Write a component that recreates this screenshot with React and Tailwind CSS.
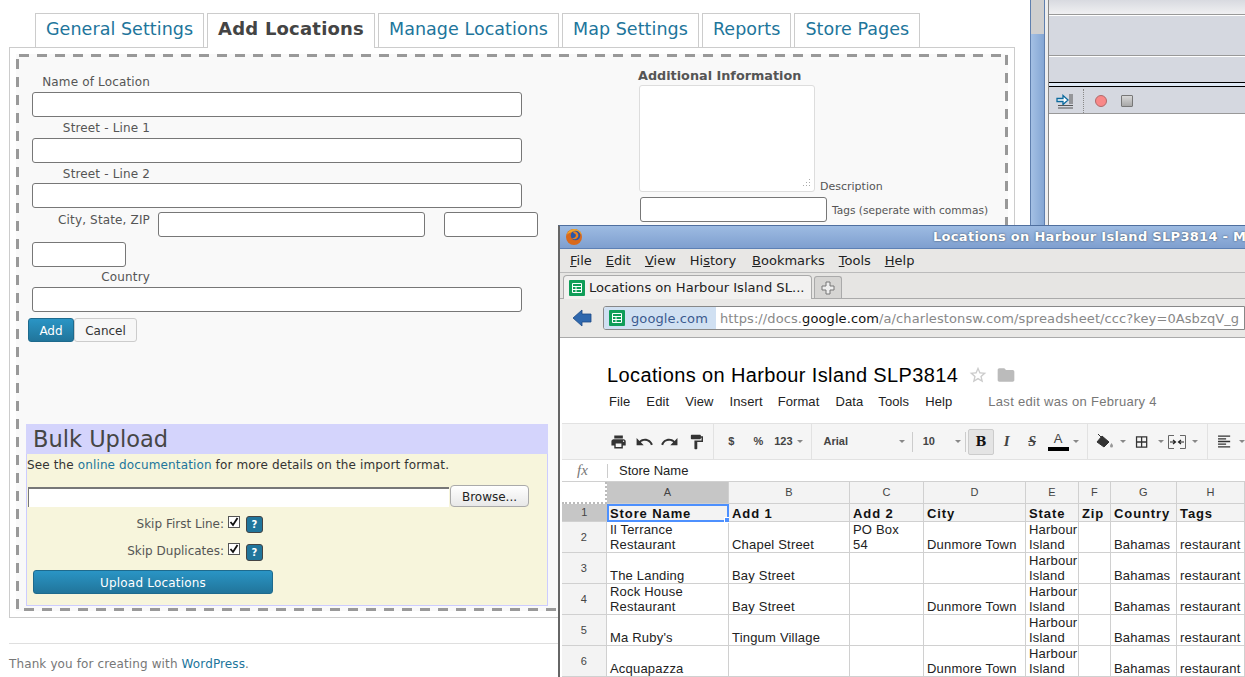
import React from 'react';
import { MdPrint, MdUndo, MdRedo, MdFormatPaint, MdBorderAll, MdFormatAlignLeft, MdStarBorder, MdFolder } from 'react-icons/md';

const TABS = ['General Settings', 'Add Locations', 'Manage Locations', 'Map Settings', 'Reports', 'Store Pages'];

const ROWS = [
  ['Il Terrance Restaurant', 'Chapel Street', 'PO Box\n54', 'Dunmore Town', 'Harbour Island', '', 'Bahamas', 'restaurant'],
  ['The Landing', 'Bay Street', '', '', 'Harbour Island', '', 'Bahamas', 'restaurant'],
  ['Rock House Restaurant', 'Bay Street', '', 'Dunmore Town', 'Harbour Island', '', 'Bahamas', 'restaurant'],
  ["Ma Ruby's", 'Tingum Village', '', '', 'Harbour Island', '', 'Bahamas', 'restaurant'],
  ['Acquapazza', '', '', 'Dunmore Town', 'Harbour Island', '', 'Bahamas', 'restaurant'],
];

const COLS = ['A', 'B', 'C', 'D', 'E', 'F', 'G', 'H'];
const HEADS = ['Store Name', 'Add 1', 'Add 2', 'City', 'State', 'Zip', 'Country', 'Tags'];

const Field = ({ className }) => (
  <input type="text" className={`block h-[25px] bg-white border border-[#777] rounded-[3px] ${className}`} />
);

const FormLabel = ({ children, className = '' }) => (
  <div className={`w-[118px] text-right text-[12px] tracking-[0.15px] leading-[16px] pb-[2px] text-[#555] ${className}`}>{children}</div>
);

const Check = () => (
  <span className="w-[12px] h-[12px] bg-white border border-[#555] flex items-center justify-center">
    <svg width="10" height="10" viewBox="0 0 10 10">
      <path d="M1.5 5 L4 8 L8.5 1" fill="none" stroke="#111" strokeWidth="1.8" />
    </svg>
  </span>
);

const Help = () => (
  <span className="ml-[6px] mt-[2px] w-[17px] h-[17px] rounded-[3px] bg-[#21759b] border border-[#444] text-white text-[10px] font-bold flex items-center justify-center">?</span>
);

const Caret = ({ className = '' }) => (
  <span className={`w-0 h-0 border-x-[3px] border-x-transparent border-t-[3px] border-t-[#888] ${className}`} />
);

const SheetIcon = () => (
  <svg width="16" height="16" viewBox="0 0 16 16" className="shrink-0">
    <rect width="16" height="16" rx="1" fill="#0f9d58" />
    <path d="M3.5 3.5h9v9h-9z M3.5 6.5h9 M3.5 9.5h9 M7 6.5v6" fill="none" stroke="#fff" strokeWidth="1" />
  </svg>
);

const FirefoxIcon = () => (
  <svg width="18" height="18" viewBox="0 0 18 18" className="shrink-0">
    <circle cx="9" cy="9" r="8" fill="#d9691c" />
    <path d="M1.500 7C3 3 6 1 9 1c4 0 7 2.500 7.800 6-1.500-2.200-4-3.200-7-3C6 4.200 3.500 5 1.500 7z" fill="#efa52c" />
    <circle cx="10.500" cy="7.500" r="4.800" fill="#2b57a6" />
    <path d="M8 3.500c2.500-.6 5 1 5.300 3.500.2 2-1 3.500-2.800 4-1.500.4-3-.1-4-1.200 1.500.5 3.200.2 4-1 .8-1.200.4-2.600-.8-3.200-.6-.3-1.300-.3-1.700-2.100z" fill="#e9811f" />
  </svg>
);

const BackArrow = () => (
  <svg width="20" height="20" viewBox="0 0 20 20">
    <path d="M1 10 L10 2 V6 H19 V14 H10 V18 Z" fill="#2f68ae" stroke="#1d4a85" strokeWidth="0.8" />
  </svg>
);

const MergeIcon = () => (
  <svg width="18" height="14" viewBox="0 0 18 14">
    <path d="M6 .5H.5v13H6 M12 .5h5.500v13H12" fill="none" stroke="#666" />
    <path d="M2 7h5M5 5l2.500 2L5 9 M16 7h-5M13 5l-2.500 2L13 9" fill="none" stroke="#222" strokeWidth="1.200" />
  </svg>
);

const FillIcon = () => (
  <svg width="18" height="18" viewBox="0 0 18 18">
    <path d="M2 1 L6 5 M6 3 L13 9 L8 14 L1 9 Z" fill="#333" stroke="#333" strokeWidth="1" />
    <path d="M15.500 10c1 1.500 1.500 2.300 1.500 3a1.500 1.500 0 0 1-3 0c0-.7.500-1.500 1.500-3z" fill="#999" />
  </svg>
);

const StoreForm = () => (
  <div className="pl-[16px]">
    <FormLabel className="mt-[20px]">Name of Location</FormLabel>
    <Field className="w-[490px]" />
    <FormLabel className="mt-[3px]">Street - Line 1</FormLabel>
    <Field className="w-[490px]" />
    <FormLabel className="mt-[3px] -mb-[1px]">Street - Line 2</FormLabel>
    <Field className="w-[490px]" />
    <div className="flex mt-[4px]">
      <FormLabel className="leading-[14px] mr-[8px]">City, State, ZIP</FormLabel>
      <Field className="w-[267px]" />
      <Field className="w-[94px] ml-[19px]" />
    </div>
    <Field className="w-[94px] mt-[5px]" />
    <FormLabel className="mt-[2px]">Country</FormLabel>
    <Field className="w-[490px]" />
    <div className="flex -ml-[4px] mt-[6px] text-[12px]">
      <button className="w-[46px] h-[24px] pt-[1px] rounded-[3px] bg-gradient-to-b from-[#2a95c5] to-[#21759b] border border-[#1e6a8d] text-white">Add</button>
      <button className="w-[63px] h-[24px] pt-[1px] rounded-[3px] bg-[#f7f7f7] border border-[#ccc] text-[#333]">Cancel</button>
    </div>
  </div>
);

const BulkUpload = () => (
  <div className="ml-[10px] mt-[82px] w-[522px] h-[182px] bg-[#f7f5dc] border border-[#ccccff] border-t-0 text-[12px] text-[#555]">
    <h2 className="h-[30px] -mx-px bg-[#d4d4fc] pl-[7px] text-[22.5px] leading-[30px] text-[#464646]">Bulk Upload</h2>
    <p className="mt-[4px] text-[#333] leading-[15px] tracking-[0.13px]">
      See the <span className="text-[#21759b]">online documentation</span> for more details on the import format.
    </p>
    <div className="flex items-center ml-[1px] mt-[12px] h-[22px]">
      <div className="w-[421px] h-[20px] mt-[1px] bg-white border-t-[2px] border-l border-[#777]" />
      <button className="ml-[1px] w-[79px] h-[22px] pt-[1px] rounded-[4px] bg-gradient-to-b from-white to-[#e8e8e8] border border-[#aaa] text-[#222]">Browse...</button>
    </div>
    <div className="flex mt-[7px] h-[20px]">
      <span className="w-[197px] text-right leading-[20px]">Skip First Line:</span>
      <span className="ml-[4px] mt-[2px]"><Check /></span>
      <Help />
    </div>
    <div className="flex mt-[8px] h-[20px]">
      <span className="w-[197px] text-right leading-[18px]">Skip Duplicates:</span>
      <span className="ml-[4px] mt-[1px]"><Check /></span>
      <Help />
    </div>
    <button className="block ml-[6px] mt-[8px] w-[240px] h-[24px] pt-[1px] rounded-[3px] bg-gradient-to-b from-[#2a95c5] to-[#21759b] border border-[#1e6a8d] text-white tracking-[0.2px]">Upload Locations</button>
  </div>
);

const AdditionalInfo = () => (
  <div className="ml-[90px] pt-[14px]">
    <h3 className="text-[12.8px] leading-[15px] font-bold text-[#555]">Additional Information</h3>
    <div className="flex items-end ml-[1px] mt-[2px]">
      <div className="relative w-[176px] h-[107px] bg-white border border-[#ddd] rounded-[3px]">
        <svg width="10" height="10" viewBox="0 0 10 10" className="absolute right-[3px] bottom-[3px]">
          <path d="M8.500 1v1M8.500 4v1M8.500 7v1M5.500 4v1M5.500 7v1M2.500 7v1" stroke="#aaa" strokeWidth="1" />
        </svg>
      </div>
      <span className="ml-[5px] -mb-[1px] text-[11px] text-[#555] leading-[13px]">Description</span>
    </div>
    <div className="flex items-center ml-[2px] mt-[5px]">
      <Field className="w-[187px]" />
      <span className="ml-[5px] pt-[3px] text-[10.6px] text-[#555]">Tags (seperate with commas)</span>
    </div>
  </div>
);

const SideWindow = () => (
  <div className="flex-1 flex h-[225px]">
    <div className="w-[15px] flex flex-col border-x border-[#5f7fae]">
      <div className="h-[34px] bg-[#cfcfcf]" />
      <div className="flex-1 bg-gradient-to-r from-[#a4c0e4] to-[#84a6d4]" />
    </div>
    <div className="w-[4px] bg-[#eeeeee] border-r border-[#888]" />
    <div className="flex-1 flex flex-col bg-white">
      <div className="h-[15px] bg-gradient-to-b from-[#d8dae0] to-[#f0f0f2] border-b border-[#999]" />
      <div className="h-[41px] bg-[#d5d8e0] border-b border-[#999] border-t border-t-white" />
      <div className="h-[26px] bg-[#d5d8e0] border-t border-t-white" />
      <div className="h-[5px] bg-[#dfe9f6] border-y border-black" />
      <div className="h-[27px] pt-[2px] flex items-center bg-[#d5d8e0] border-b border-[#999]">
        <svg width="18" height="16" viewBox="0 0 18 16" className="ml-[7px]">
          <path d="M1 5.500h6V2.500l5 4.500-5 4.500V8.500H1z" fill="#fff" stroke="#0b6a9e" strokeWidth="1.300" />
          <path d="M13 2h4M13 4h4M13 6h4M13 8h4M13 10h4M2 12.500h15M2 15h15" stroke="#555" strokeWidth="1" />
        </svg>
        <span className="h-[24px] ml-[9px] border-l border-dotted border-[#888]" />
        <span className="ml-[11px] w-[12px] h-[12px] rounded-full bg-[#f98888] border border-[#b06a6a]" />
        <span className="ml-[14px] w-[12px] h-[12px] rounded-[1px] bg-gradient-to-b from-[#d8d8d8] to-[#a8a8a8] border border-[#777]" />
      </div>
    </div>
  </div>
);

const SheetToolbar = () => (
  <div className="h-[37px] flex items-center bg-[#f5f5f5] border-y border-[#e2e2e2] text-[#444] text-[11px] font-bold">
    <MdPrint className="ml-[48px] text-[#333]" size={18} />
    <MdUndo className="ml-[8px] text-[#333]" size={20} />
    <MdRedo className="ml-[6px] text-[#333]" size={20} />
    <MdFormatPaint className="ml-[9px] text-[#333]" size={18} />
    <span className="ml-[8px] h-[36px] border-l border-[#e2e2e2]" />
    <span className="ml-[14px]">$</span>
    <span className="ml-[19px]">%</span>
    <span className="ml-[11px]">123</span>
    <Caret className="ml-[4px]" />
    <span className="ml-[8px] h-[36px] border-l border-[#e2e2e2]" />
    <span className="ml-[12px] w-[79px]">Arial</span>
    <Caret />
    <span className="ml-[7px] h-[20px] border-l border-[#ccc]" />
    <span className="ml-[10px] w-[34px]">10</span>
    <Caret />
    <span className="ml-[4px] h-[20px] border-l border-[#ccc]" />
    <span className="ml-[2px] w-[27px] h-[26px] flex items-center justify-center rounded-[2px] bg-[#e4e4e4] border border-[#ccc] font-['DejaVu_Serif'] text-[13px] text-[#111]">B</span>
    <span className="ml-[10px] w-[12px] font-['Liberation_Serif'] italic text-[15px] font-bold">I</span>
    <span className="ml-[13px] w-[14px] font-['Liberation_Serif'] italic line-through text-[14px]">S</span>
    <span className="ml-[6px] w-[21px] flex flex-col items-center font-['Liberation_Sans'] font-normal text-[13px] leading-[13px]">
      A
      <span className="w-[21px] h-[4px] mt-[2px] bg-black" />
    </span>
    <Caret className="ml-[4px]" />
    <span className="ml-[8px] h-[36px] border-l border-[#e2e2e2]" />
    <span className="ml-[8px]"><FillIcon /></span>
    <Caret className="ml-[6px]" />
    <MdBorderAll className="ml-[8px] text-[#333]" size={16} />
    <Caret className="ml-[9px]" />
    <span className="ml-[4px]"><MergeIcon /></span>
    <Caret className="ml-[6px]" />
    <span className="ml-[9px] h-[36px] border-l border-[#e2e2e2]" />
    <MdFormatAlignLeft className="ml-[8px] text-[#333]" size={17} />
    <Caret className="ml-[7px]" />
  </div>
);

const SheetGrid = () => (
  <div className="grid grid-cols-[45px_122px_121px_74px_102px_53px_32px_66px_68px] grid-rows-[22px_18px_31px_31px_31px_31px_31px] text-[13px] leading-[15px] tracking-[0.2px] text-[#222] border-t border-[#d0d0d0]">
    <div className="bg-white border-r-2 border-b-2 border-dotted border-[#bbb]" />
    {COLS.map((c, i) => (
      <div key={c} className={`flex items-center justify-center text-[11px] text-[#444] border-r border-b border-[#d0d0d0] ${i === 0 ? 'bg-[#c6c6c6]' : 'bg-[#f3f3f3]'}`}>{c}</div>
    ))}
    <div className="flex items-center justify-center bg-[#c6c6c6] text-[11px] text-[#444] border-b border-[#d0d0d0]">1</div>
    {HEADS.map((h, i) => (
      <div key={h} className={`relative flex items-end font-bold tracking-[0.9px] bg-[#f3f3f3] text-[#111] ${i === 0 ? 'px-[1px] border-2 border-[#4d90fe]' : 'px-[3px] border-r border-b border-[#d0d0d0]'}`}>
        {i === 0 ? <span className="relative top-[1px]">{h}</span> : h}
        {i === 0 && <span className="absolute -right-[3px] -bottom-[3px] w-[6px] h-[6px] bg-[#4d90fe] border border-white" />}
      </div>
    ))}
    {ROWS.map((row, r) => (
      <React.Fragment key={r}>
        <div className="flex items-center justify-center bg-[#f3f3f3] text-[11px] text-[#444] border-r border-b border-[#d0d0d0]">{r + 2}</div>
        {row.map((cell, c) => (
          <div key={c} className="flex items-end px-[3px] border-r border-b border-[#d0d0d0] overflow-hidden whitespace-pre-line">{cell}</div>
        ))}
      </React.Fragment>
    ))}
  </div>
);

const BrowserWindow = () => (
  <div className="absolute left-[558px] top-[225px] w-[687px] h-[452px] flex flex-col overflow-hidden bg-white border-l-2 border-l-[#666] border-t border-t-[#4f6f9f]">
    <div className="h-[23px] shrink-0 flex items-center pl-[5px] bg-gradient-to-b from-[#9dbbe2] to-[#7f9fcf] border-b border-[#5d80b4] whitespace-nowrap">
      <FirefoxIcon />
      <span className="ml-[350px] text-[13px] font-bold tracking-[0.3px] text-white [text-shadow:0_0_2px_#345]">Locations on Harbour Island SLP3814 - Mozilla Firefox</span>
    </div>
    <div className="h-[24px] pt-[1px] shrink-0 flex items-center pl-[10px] gap-[14px] bg-[#e8e7e5] border-b border-[#bbb] text-[13px] text-[#222] whitespace-nowrap">
      <span><u>F</u>ile</span>
      <span><u>E</u>dit</span>
      <span><u>V</u>iew</span>
      <span>Hi<u>s</u>tory</span>
      <span className="ml-[2px]"><u>B</u>ookmarks</span>
      <span><u>T</u>ools</span>
      <span><u>H</u>elp</span>
    </div>
    <div className="h-[26px] shrink-0 flex items-end pl-[3px] bg-[#e6e5e3] border-b border-[#aaa]">
      <div className="w-[249px] h-[24px] -mb-px flex items-center pl-[5px] gap-[4px] rounded-t-[4px] bg-[#f2f1f0] border border-[#aaa] border-b-0 text-[13.1px] text-[#222] whitespace-nowrap overflow-hidden">
        <SheetIcon />
        Locations on Harbour Island SL...
      </div>
      <div className="ml-[2px] w-[28px] h-[22px] flex items-center justify-center rounded-t-[3px] bg-[#d6d5d3] border border-[#aaa] border-b-0">
        <svg width="14" height="14" viewBox="0 0 14 14"><path d="M5 1h4v4h4v4H9v4H5V9H1V5h4z" fill="#eee" stroke="#777" /></svg>
      </div>
    </div>
    <div className="h-[39px] shrink-0 flex items-center pl-[12px] bg-[#e9e8e6] border-b border-[#aaa]">
      <BackArrow />
      <div className="ml-[11px] flex-1 h-[24px] flex items-center bg-white border border-[#888] rounded-l-[3px] text-[13px] tracking-[0.1px] whitespace-nowrap overflow-hidden">
        <span className="h-full flex items-center pl-[5px] pr-[8px] gap-[6px] bg-[#d0e0f2] text-[#3b5a8f]"><SheetIcon /><span className="pt-[1px]">google.com</span></span>
        <span className="ml-[4px] pt-[1px] text-[#888]">https://docs.<span className="text-[#111]">google.com</span>/a/charlestonsw.com/spreadsheet/ccc?key=0AsbzqV_g</span>
      </div>
    </div>
    <div className="flex-1 font-['Liberation_Sans'] ml-[2px] overflow-hidden">
      <div className="h-[85px] pl-[45px]">
        <div className="flex items-center pt-[24px] h-[50px]">
          <span className="text-[20px] leading-[26px] text-black tracking-[0.38px]">Locations on Harbour Island SLP3814</span>
          <MdStarBorder className="ml-[10px] text-[#ccc]" size={20} />
          <MdFolder className="ml-[8px] text-[#bbb]" size={20} />
        </div>
        <div className="flex items-center mt-[6px] text-[13px] text-[#222] leading-[15px] tracking-[0.1px]">
          <span className="ml-[2px]">File</span>
          <span className="ml-[16px]">Edit</span>
          <span className="ml-[16px]">View</span>
          <span className="ml-[16px]">Insert</span>
          <span className="ml-[15px]">Format</span>
          <span className="ml-[16px]">Data</span>
          <span className="ml-[15px]">Tools</span>
          <span className="ml-[16px]">Help</span>
          <span className="ml-[36px] text-[#777] tracking-[0.3px]">Last edit was on February 4</span>
        </div>
      </div>
      <SheetToolbar />
      <div className="h-[21px] flex items-center text-[13px] text-[#222]">
        <span className="ml-[15px] w-[30px] font-['Liberation_Serif'] italic text-[#777] text-[15px]">fx</span>
        <span className="h-[14px] border-l border-[#ccc]" />
        <span className="ml-[11px]">Store Name</span>
      </div>
      <SheetGrid />
    </div>
  </div>
);

export default function App() {
  return (
    <div className="relative w-[1245px] h-[677px] overflow-hidden bg-white flex font-['DejaVu_Sans',sans-serif]">
      <div className="w-[1030px] shrink-0 pl-[9px] pt-[13px]">
        <nav className="flex gap-[3px] pl-[26px]">
          {TABS.map((tab, i) => (
            <div
              key={tab}
              className={`relative px-[10px] flex items-center border border-b-0 border-[#ccc] whitespace-nowrap ${i === 1 ? 'font-bold text-[#444] -mb-px h-[35px] pb-[5px] bg-white z-10 text-[18px] tracking-[0.2px]' : 'h-[34px] pb-[2px] text-[#21759b] text-[17.5px] tracking-[0.05px]'}`}
            >
              {tab}
            </div>
          ))}
        </nav>
        <div className="w-[1006px] h-[571px] border border-[#ccc] p-[6px] bg-white">
          <div className="w-[992px] h-[557px] bg-[#f9f9f9] bg-no-repeat [background-image:repeating-linear-gradient(90deg,transparent_0_3px,#999_3px_13px,transparent_13px_18px),repeating-linear-gradient(90deg,transparent_0_8px,#999_8px_18px),repeating-linear-gradient(180deg,transparent_0_5px,#999_5px_15px,transparent_15px_18px),repeating-linear-gradient(180deg,transparent_0_1px,#999_1px_11px,transparent_11px_18px)] [background-size:100%_3px,100%_3px,3px_100%,3px_100%] [background-position:0_0,0_100%,0_0,100%_0] flex">
            <div className="w-[532px] shrink-0">
              <StoreForm />
              <BulkUpload />
            </div>
            <AdditionalInfo />
          </div>
        </div>
        <footer className="mt-[25px] w-[1006px] border-t border-[#dfdfdf] pt-[13px] text-[12px] leading-[15px] tracking-[0.12px] text-[#777]">
          Thank you for creating with <span className="text-[#21759b]">WordPress</span>.
        </footer>
      </div>
      <SideWindow />
      <BrowserWindow />
    </div>
  );
}
